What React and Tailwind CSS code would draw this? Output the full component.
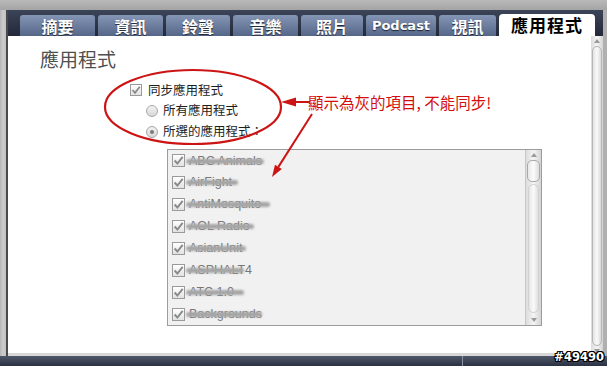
import React from "react";

const tabs = [
  { label: "摘要", w: 75 },
  { label: "資訊", w: 65 },
  { label: "鈴聲", w: 64 },
  { label: "音樂", w: 65 },
  { label: "照片", w: 62 },
  { label: "Podcast", w: 70, latin: true },
  { label: "視訊", w: 57 },
];

const apps = [
  ["ABC Animals", 78],
  ["AirFight", 52],
  ["AntiMosquito", 84],
  ["AOL Radio", 68],
  ["AsianUnit", 60],
  ["ASPHALT4", 58],
  ["ATC 1.0", 58],
  ["Backgrounds", 76],
];

function Check({ size = 12 }) {
  return (
    <span
      className="flex items-center justify-center border border-[#9a9a9a] bg-gradient-to-b from-[#ffffff] to-[#e2e2e2] shrink-0"
      style={{ width: size, height: size }}
    >
      <svg width={size - 2} height={size - 2} viewBox="0 0 10 10">
        <path d="M1.5 5 L4 7.8 L8.8 1.8" fill="none" stroke="#8a8a8a" strokeWidth="1.8" />
      </svg>
    </span>
  );
}

function Radio({ on }) {
  return (
    <span className="flex items-center justify-center w-[12px] h-[12px] rounded-full border border-[#a8a8a8] bg-gradient-to-b from-[#f2f2f2] to-[#d8d8d8] shrink-0">
      {on && <span className="w-[4px] h-[4px] rounded-full bg-[#7a7a7a]" />}
    </span>
  );
}

function VScroll({ thumbTop = false, className = "" }) {
  return (
    <div className={"flex flex-col bg-gradient-to-r from-[#dcdcdc] via-[#f4f4f4] to-[#d4d4d4] " + className}>
      <div className="h-[10px] flex items-center justify-center">
        <svg width="6" height="4" viewBox="0 0 6 4"><path d="M0 4 L3 0 L6 4Z" fill="#9a9a9a" /></svg>
      </div>
      {thumbTop ? (
        <>
          <div className="mx-[1px] h-[22px] rounded-[5px] border border-[#a9a9a9] bg-gradient-to-r from-[#e8e8e8] via-[#fbfbfb] to-[#dedede]" />
          <div className="flex-1 mx-[2px] my-[2px] rounded-[6px] border border-[#cfcfcf] bg-gradient-to-r from-[#e6e6e6] via-[#fafafa] to-[#e0e0e0]" />
        </>
      ) : (
        <div className="flex-1 mx-[1px] rounded-[6px] border border-[#b5b5b5] bg-gradient-to-r from-[#e2e2e2] via-[#fafafa] to-[#d8d8d8]" />
      )}
      <div className="h-[10px] flex items-center justify-center">
        <svg width="6" height="4" viewBox="0 0 6 4"><path d="M0 0 L6 0 L3 4Z" fill="#9a9a9a" /></svg>
      </div>
    </div>
  );
}

export default function App() {
  return (
    <div className="relative w-[607px] h-[366px] overflow-hidden flex flex-col bg-[#b4b4b4] font-['Liberation_Sans','Noto_Sans_CJK_TC',sans-serif]">
      {/* top strip */}
      <div className="h-[10px] shrink-0 bg-gradient-to-b from-[#b9b9b9] to-[#a4a4a4]" />
      <div className="flex flex-1 min-h-0">
        {/* left partial scrollbar */}
        <div className="w-[8px] shrink-0 bg-gradient-to-r from-[#b4b4b4] via-[#cdcdcd] to-[#c0c0c0] border-r-[2px] border-[#4a4a4a]" />
        <div className="w-[595px] shrink-0 flex flex-col">
          {/* tab band */}
          <div className="h-[26px] shrink-0 flex items-end pl-[12px] gap-[3px] bg-gradient-to-b from-[#3c4458] to-[#232939]">
            {tabs.map((t) => (
              <div
                key={t.label}
                className={
                  "h-[21px] flex items-center justify-center rounded-t-[3px] bg-gradient-to-b from-[#8595b4] via-[#6d7e9f] to-[#566688] text-white font-bold [text-shadow:0_1px_1px_#1c2233] " +
                  (t.latin
                    ? "text-[13px] font-['DejaVu_Sans',sans-serif]"
                    : "text-[16px] font-['Noto_Sans_CJK_TC',sans-serif]")
                }
                style={{ width: t.w }}
              >
                {t.label}
              </div>
            ))}
            <div className="w-[96px] h-[22px] flex items-center justify-center rounded-t-[4px] bg-white text-black font-bold text-[17px] tracking-[1px] font-['Noto_Sans_CJK_TC',sans-serif]">
              應用程式
            </div>
          </div>
          {/* content */}
          <div className="flex flex-1 min-h-0">
            <div className="flex-1 bg-white flex flex-col border-b-[3px] border-[#d8d8d8]">
              <div className="ml-[32px] mt-[11px] h-[24px] leading-[24px] text-[19px] text-[#4f4f4f] font-['Noto_Sans_CJK_TC',sans-serif]">
                應用程式
              </div>
              <div className="ml-[122px] mt-[9px] flex flex-col text-[12.5px] text-[#1e1e1e] font-['Noto_Sans_CJK_TC',sans-serif]">
                <div className="h-[20px] flex items-center gap-[6px]">
                  <Check size={12} />
                  <span>同步應用程式</span>
                </div>
                <div className="h-[21px] flex items-center gap-[5px] ml-[16px]">
                  <Radio />
                  <span>所有應用程式</span>
                </div>
                <div className="h-[21px] flex items-center gap-[5px] ml-[16px]">
                  <Radio on />
                  <span>所選的應用程式：</span>
                </div>
              </div>
              <div className="ml-[159px] mt-[7px] w-[375px] h-[177px] flex border border-[#9c9c9c] bg-[#f1f1f1]">
                <div className="flex-1 flex flex-col">
                  {apps.map(([name, w]) => (
                    <div key={name} className="h-[22.3px] flex items-center pl-[4px] gap-[4px]">
                      <Check size={13} />
                      <span className="relative text-[12.5px] text-[#777777]">
                        {name}
                        <span
                          className="absolute left-[-3px] top-[7px] h-[5px] rounded-full bg-[#a6a6a6] blur-[0.8px]"
                          style={{ width: w }}
                        />
                      </span>
                    </div>
                  ))}
                </div>
                <VScroll thumbTop className="w-[16px] border-l border-[#c8c8c8]" />
              </div>
            </div>
            <VScroll className="w-[12px]" />
          </div>
        </div>
        <div className="flex-1 bg-[#b0b0b0]" />
      </div>
      {/* bottom bar */}
      <div className="h-[10px] shrink-0 flex bg-gradient-to-b from-[#4f586b] to-[#2a3141]">
        <div className="w-[463px] border-r border-[#8a92a2]" />
      </div>

      {/* annotations */}
      <svg className="absolute left-0 top-0" width="607" height="366" viewBox="0 0 607 366">
        <ellipse cx="193" cy="107" rx="88" ry="37" fill="none" stroke="#cc1414" strokeWidth="2.2" />
        <line x1="310" y1="102" x2="294" y2="102" stroke="#cc1414" strokeWidth="2" />
        <path d="M281 102 L296 97.5 L296 106.5Z" fill="#cc1414" />
        <line x1="312" y1="114" x2="278.4" y2="166.9" stroke="#cc1414" strokeWidth="2" />
        <path d="M272 177 L281.8 169 L275 164.8Z" fill="#cc1414" />
      </svg>
      <div className="absolute left-[308px] top-[91px] text-[15.5px] leading-[22px] text-[#d40d0d] font-['Noto_Sans_CJK_TC',sans-serif] whitespace-nowrap">
        顯示為灰的項目, 不能同步!
      </div>
      <div className="absolute right-[3px] bottom-[2px] text-[11.5px] leading-[14px] font-bold text-white font-['DejaVu_Sans',sans-serif] [text-shadow:1px_0_0_#000,-1px_0_0_#000,0_1px_0_#000,0_-1px_0_#000,1px_1px_0_#000,-1px_-1px_0_#000,1px_-1px_0_#000,-1px_1px_0_#000]">
        #49490
      </div>
    </div>
  );
}
